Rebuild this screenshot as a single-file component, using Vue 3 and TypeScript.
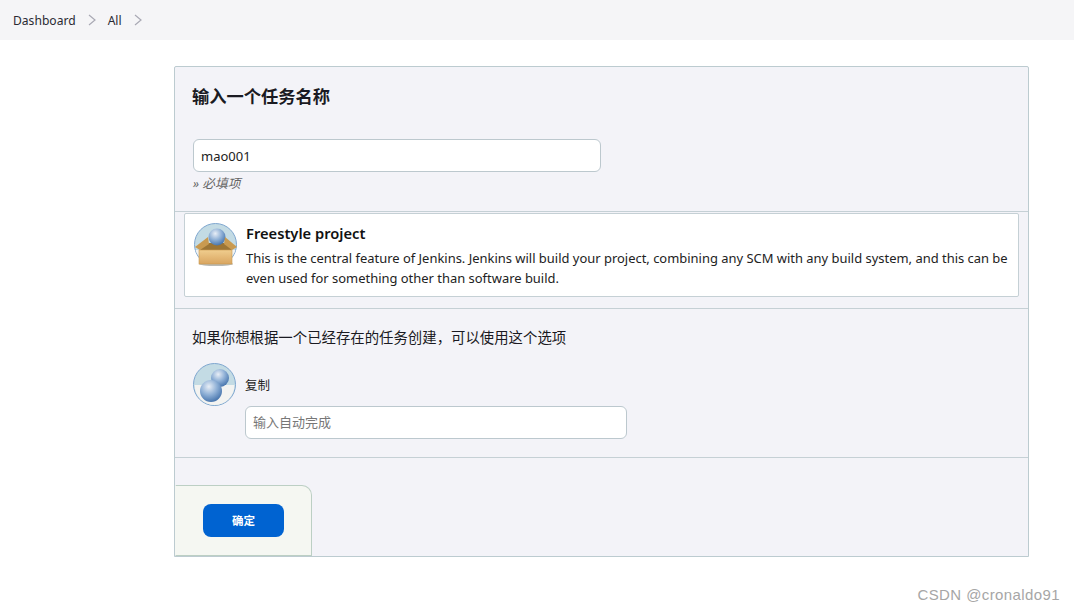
<script setup lang="ts">
const crumbs: string[] = ['Dashboard', 'All']
</script>

<template>
  <div class="page">
    <nav class="crumbs">
      <template v-for="c in crumbs" :key="c">
        <span class="crumb">{{ c }}</span>
        <svg class="chev" width="8" height="12" viewBox="0 0 8 12"><path d="M1 1l6 5-6 5" fill="none" stroke="#a9a9b4" stroke-width="1.2" /></svg>
      </template>
    </nav>
    <main class="panel">
      <section class="name-sec">
        <h2 class="title">输入一个任务名称</h2>
        <input class="field name-input" value="mao001" />
        <div class="req">» 必填项</div>
      </section>
      <section class="types">
        <div class="item">
          <svg class="icon" width="44" height="44" viewBox="0 0 44 44">
            <defs>
              <radialGradient id="ball" cx="0.4" cy="0.3" r="0.75">
                <stop offset="0" stop-color="#e8eef6" />
                <stop offset="0.5" stop-color="#8fb0d6" />
                <stop offset="1" stop-color="#3f6ea8" />
              </radialGradient>
              <linearGradient id="box" x1="0" y1="0" x2="0" y2="1">
                <stop offset="0" stop-color="#f0cd8e" />
                <stop offset="1" stop-color="#d9a560" />
              </linearGradient>
            </defs>
            <circle cx="21.5" cy="21.5" r="21" fill="#c3dbe4" stroke="#7ea6cf" />
            <path d="M1.5 27h40a21 21 0 0 1-40 0z" fill="#f3f3f1" />
            <ellipse cx="22" cy="41" rx="17" ry="2" fill="#b9b9b4" />
            <path d="M10 20H34L38 27H6z" fill="#9c7535" />
            <circle cx="23" cy="14" r="8.5" fill="url(#ball)" />
            <path d="M1 24L14 14L15 21L6 27z" fill="#c99a50" />
            <path d="M43 24L31 14L30 21L38 27z" fill="#c99a50" />
            <rect x="5" y="27" width="33" height="14" fill="url(#box)" stroke="#c99a50" stroke-width="0.6" />
          </svg>
          <div class="item-text">
            <div class="item-title">Freestyle project</div>
            <p class="item-desc">This is the central feature of Jenkins. Jenkins will build your project, combining any SCM with any build system, and this can be even used for something other than software build.</p>
          </div>
        </div>
      </section>
      <section class="copy-sec">
        <p class="copy-hint">如果你想根据一个已经存在的任务创建，可以使用这个选项</p>
        <div class="copy-row">
          <svg class="icon" width="44" height="44" viewBox="0 0 44 44">
            <defs>
              <radialGradient id="ball2" cx="0.4" cy="0.3" r="0.75">
                <stop offset="0" stop-color="#e8eef6" />
                <stop offset="0.5" stop-color="#8fb0d6" />
                <stop offset="1" stop-color="#3f6ea8" />
              </radialGradient>
            </defs>
            <circle cx="21.5" cy="21.5" r="21" fill="#c3dbe4" stroke="#7ea6cf" />
            <path d="M1.5 22h40a20 20 0 0 1-40 0z" fill="#f3f3f1" />
            <circle cx="27" cy="15" r="9" fill="url(#ball2)" />
            <circle cx="18" cy="28" r="11" fill="url(#ball2)" />
          </svg>
          <span class="copy-label">复制</span>
        </div>
        <input class="field copy-input" placeholder="输入自动完成" />
      </section>
      <section class="foot">
        <div class="tab">
          <button class="ok" type="button">确定</button>
        </div>
      </section>
    </main>
    <div class="mark">CSDN @cronaldo91</div>
  </div>
</template>

<style>
html, body { margin: 0; background: #fff; }
</style>

<style scoped>
.page {
  height: 611px;
  position: relative;
  overflow: hidden;
  font-family: "Noto Sans", "Noto Sans CJK SC", sans-serif;
  color: #1a1a22;
  font-size: 13px;
}
.crumbs {
  height: 40px;
  background: #f5f5f7;
  display: flex;
  align-items: center;
  padding-left: 13px;
  box-sizing: border-box;
}
.crumb { font-size: 12.1px; color: #2a2a33; }
.chev { margin: 0 12px; }
.panel {
  margin: 26px 0 0 174px;
  width: 855px;
  height: 491px;
  box-sizing: border-box;
  background: #f3f3f8;
  border: 1px solid #bccbd0;
  border-radius: 2px 2px 0 0;
  display: flex;
  flex-direction: column;
}
.name-sec {
  height: 145px;
  box-sizing: border-box;
  border-bottom: 1px solid #c5d0d5;
  padding: 19px 17px 0;
}
.title { margin: 0; font-size: 17.25px; line-height: 22px; font-weight: 700; color: #1a1a22; }
.field {
  display: block;
  box-sizing: border-box;
  height: 33px;
  background: #fff;
  border: 1px solid #bcc8ce;
  border-radius: 6px;
  padding: 0 7px 2px;
  font: 13px "Noto Sans", "Noto Sans CJK SC", sans-serif;
  color: #222;
  outline: none;
}
.field::placeholder { color: #777; }
.name-input { width: 408px; margin-top: 31px; margin-left: 1px; padding-bottom: 0; }
.req { font-size: 12.7px; font-style: italic; color: #666; margin: 3px 0 0 1px; line-height: 17px; }
.types {
  height: 98px;
  box-sizing: border-box;
  border-bottom: 1px solid #c5d0d5;
  padding: 1px 9px 0;
}
.item {
  height: 84px;
  box-sizing: border-box;
  background: #fff;
  border: 1px solid #c5d0d5;
  border-radius: 2px;
  display: flex;
  padding: 9px 9px 0 9px;
  gap: 8px;
}
.icon { flex: none; }
.item-text { min-width: 0; margin-top: -1px; }
.item-title { font-size: 14.7px; line-height: 22px; font-weight: 600; color: #111; }
.item-desc { margin: 4px 0 0; font-size: 12.94px; line-height: 20px; color: #222; }
.copy-sec {
  height: 149px;
  box-sizing: border-box;
  border-bottom: 1px solid #c5d0d5;
  padding: 19px 17px 0;
}
.copy-hint { margin: 0; font-size: 14.4px; line-height: 20px; color: #1a1a22; }
.copy-row { display: flex; align-items: center; gap: 9px; margin-top: 15px; margin-left: 1px; }
.copy-label { font-size: 12.5px; color: #222; margin-left: -1px; margin-top: -2px; }
.copy-input { width: 382px; margin-left: 53px; margin-top: -1px; }
.foot { flex: 1; padding-top: 27px; display: flex; flex-direction: column; }
.tab {
  width: 137px;
  height: 71px;
  box-sizing: border-box;
  background: #f5f7f2;
  border: 1px solid #bccfc4;
  border-left-color: #f5f7f2;
  border-radius: 0 10px 0 0;
  padding: 18px 0 0 27px;
}
.ok {
  display: block;
  width: 81px;
  height: 33px;
  border: 0;
  border-radius: 8px;
  background: #0063d1;
  color: #fff;
  font: 700 11.5px "Noto Sans", "Noto Sans CJK SC", sans-serif;
  padding: 0;
}
.mark {
  position: absolute;
  right: 14px;
  top: 586px;
  font: 15px "Liberation Sans", sans-serif;
  color: #a6a6a6;
  letter-spacing: 0.4px;
}
</style>
